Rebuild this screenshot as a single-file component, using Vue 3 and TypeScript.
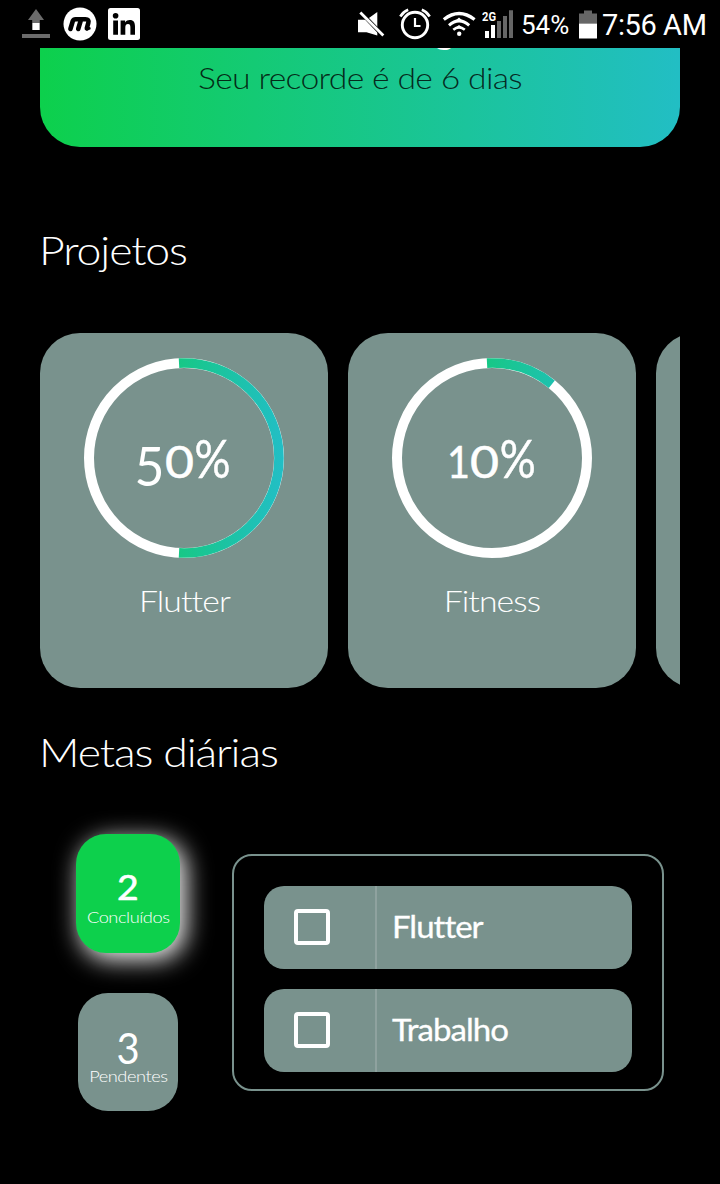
<script setup lang="ts">
interface Project {
  name: string
  progress: number
  digits: { char: string; x: number; y: number; width: number; tall?: boolean }[]
  percentX: number
  kind: string
}

interface Goal {
  name: string
  done: boolean
}

const projects: Project[] = [
  {
    name: 'Flutter',
    progress: 50,
    digits: [
      { char: '5', x: 50.5, y: 127.5, width: 30, tall: true },
      { char: '0', x: 81, y: 120, width: 29 },
    ],
    percentX: 110.5,
    kind: 'flutter',
  },
  {
    name: 'Fitness',
    progress: 10,
    digits: [
      { char: '1', x: 55, y: 120, width: 23 },
      { char: '0', x: 78, y: 120, width: 29 },
    ],
    percentX: 107.7,
    kind: 'fitness',
  },
]

const goals: Goal[] = [
  { name: 'Flutter', done: false },
  { name: 'Trabalho', done: false },
]

const RADIUS = 95

function arc(progress: number): string {
  const start = -Math.PI / 2 - 0.0526
  const end = -Math.PI / 2 + (progress / 100) * Math.PI * 2 + 0.0526
  const point = (a: number) => `${100 + RADIUS * Math.cos(a)} ${100 + RADIUS * Math.sin(a)}`
  const large = end - start > Math.PI ? 1 : 0
  return `M ${point(start)} A ${RADIUS} ${RADIUS} 0 ${large} 1 ${point(end)}`
}
</script>

<template>
  <div class="screen">
    <header class="status">
      <div class="left">
        <svg width="28" height="30" viewBox="22 9 28 30">
          <path d="M36 9 L44 20 H39.8 V30 H32.2 V20 H28 Z" fill="#6b6b6b" />
          <rect x="32.5" y="23" width="7" height="7" fill="#fff" />
          <rect x="22" y="34" width="28" height="4" fill="#6b6b6b" />
        </svg>
        <svg width="34" height="34" viewBox="0 0 34 34">
          <circle cx="17" cy="17" r="16.5" fill="#fff" />
          <g fill="none" stroke="#000" stroke-width="4.6" stroke-linecap="round" stroke-linejoin="round">
            <path d="M7.4 22 L9.8 14 Q10.6 12.2 12.5 12.2 H22.5 Q26.3 12.2 25.3 15.8 L23.8 21.4" />
            <path d="M15.2 22 L17.6 14" />
            <path d="M23.6 22 L26.2 21.4" stroke-width="3" />
          </g>
        </svg>
        <svg width="32" height="32" viewBox="0 0 32 32">
          <rect width="32" height="32" rx="2.5" fill="#fff" />
          <circle cx="7.6" cy="7.8" r="2.8" />
          <path d="M5.2 12.4 H10 V26.8 H5.2 Z M12.6 12.4 H17.1 V14.4 C18.3 12.7 19.8 12 21.7 12 C25.8 12 27 14.6 27 18.6 V26.8 H22.4 V19.7 C22.4 17.5 22.1 16 20 16 C17.9 16 17.3 17.6 17.3 19.7 V26.8 H12.6 Z" />
        </svg>
      </div>
      <div class="right">
        <svg width="27" height="26" viewBox="358 10.5 27 26">
          <path d="M358 19.3 H366.5 L377.3 11.5 V35 L366.5 31.7 H358 Z" fill="#fff" />
          <path d="M358.5 9.5 L382.5 34.5" stroke="#000" stroke-width="4" />
          <path d="M360.3 12 L383.3 35" stroke="#fff" stroke-width="2.8" />
        </svg>
        <svg class="alarm" width="32" height="32" viewBox="399 9 32 32">
          <g fill="none" stroke="#fff" stroke-width="2.9">
            <circle cx="415" cy="26" r="12.7" />
            <path d="M415 19 V27 H420.5" stroke-width="2.2" />
            <path d="M400.3 17.5 Q403.3 12.6 408.2 10.8 M421.8 10.8 Q426.7 12.6 429.7 17.5" stroke-width="2.6" />
          </g>
        </svg>
        <svg class="wifi" width="34" height="26" viewBox="442 10 34 26">
          <g fill="none" stroke="#fff">
            <path d="M443.8 18.5 Q459 6.5 474.6 18.5" stroke-width="3.2" />
            <path d="M449 24.3 Q459 15.5 469.2 24.3" stroke-width="3" />
            <path d="M453.3 28.7 Q459 24 464.8 28.7" stroke-width="2.6" />
          </g>
          <path d="M459 16.5 L464 21 H454 Z M455 27 L459 24 L463 27 Z" fill="#fff" />
          <circle cx="459.2" cy="32.7" r="2.2" fill="#fff" />
        </svg>
        <svg class="signal" width="32" height="31" viewBox="482 9 32 31">
          <text x="482" y="20.5" class="network" textLength="14" lengthAdjust="spacingAndGlyphs">2G</text>
          <path d="M485 31 H489 V38 H485 Z M491 25 H495 V38 H491 Z" fill="#fff" />
          <path d="M497 21 H501 V38 H497 Z M503 16 H507 V38 H503 Z M509 10.3 H513 V38 H509 Z" fill="#666" />
        </svg>
        <span class="battery-text">54%</span>
        <svg class="battery" width="18" height="29" viewBox="579 9.5 18 29">
          <path d="M579 13 H584 V10 H592 V13 H597 V23 H579 Z" fill="#666" />
          <rect x="579" y="23" width="18" height="15" fill="#fff" />
        </svg>
        <span class="clock">7:56 AM</span>
      </div>
    </header>

    <section class="hero">
      <span class="streak">g</span>
      <p class="record">Seu recorde é de 6 dias</p>
    </section>

    <h2 class="heading projects-title">Projetos</h2>

    <section class="projects">
      <article v-for="project in projects" :key="project.name" class="project">
        <svg class="ring" width="200" height="200" viewBox="0 0 200 200">
          <defs>
            <linearGradient :id="`ring-${project.kind}`" gradientUnits="userSpaceOnUse" x1="0" y1="0" x2="200" y2="0">
              <stop offset="0" stop-color="#0dd04c" />
              <stop offset="1" stop-color="#22bec6" />
            </linearGradient>
          </defs>
          <circle cx="100" cy="100" :r="RADIUS" fill="none" stroke="#fff" stroke-width="10" />
          <path :d="arc(project.progress)" fill="none" :stroke="`url(#ring-${project.kind})`" stroke-width="9.6" />
          <text class="value">
            <tspan
              v-for="digit in project.digits"
              :key="digit.char"
              :class="{ tall: digit.tall }"
              :x="digit.x"
              :y="digit.y"
              :textLength="digit.width"
              lengthAdjust="spacingAndGlyphs"
            >{{ digit.char }}</tspan><tspan
              class="sign"
              :x="project.percentX"
              y="120"
              textLength="36"
              lengthAdjust="spacingAndGlyphs"
            >%</tspan>
          </text>
        </svg>
        <span class="project-name">{{ project.name }}</span>
      </article>
      <article class="project" />
    </section>

    <h2 class="heading goals-title">Metas diárias</h2>

    <section class="goals">
      <div class="counters">
        <div class="counter active">
          <strong>2</strong>
          <span>Concluídos</span>
        </div>
        <div class="counter">
          <strong class="low">3</strong>
          <span>Pendentes</span>
        </div>
      </div>
      <div class="list">
        <div v-for="goal in goals" :key="goal.name" class="goal">
          <div class="check-cell"><span class="checkbox" :class="{ checked: goal.done }" /></div>
          <span class="goal-name">{{ goal.name }}</span>
        </div>
      </div>
    </section>
  </div>
</template>

<style>
html,
body {
  background: #000;
}
</style>

<style scoped>
.screen {
  width: 720px;
  height: 1184px;
  overflow: hidden;
  background: #000;
  color: #fff;
  font-family: Lato, "Open Sans", sans-serif;
  font-variant-ligatures: none;
}
.status {
  height: 48px;
  box-sizing: border-box;
  padding: 0 14px 0 22px;
  display: flex;
  justify-content: space-between;
  font-family: Roboto, sans-serif;
}
.left {
  display: flex;
  align-items: center;
  gap: 13px;
}
.left svg:nth-child(3) {
  margin-left: -2px;
}
.right {
  display: flex;
  align-items: center;
  white-space: nowrap;
}
.right svg {
  flex: none;
}
.alarm {
  margin-left: 14px;
}
.wifi {
  margin-left: 11px;
}
.signal {
  margin-left: 6px;
}
.network {
  font-size: 12px;
  font-weight: 700;
  fill: #fff;
}
.battery-text {
  width: 48px;
  margin-left: 7px;
  padding-top: 2px;
  font-size: 26px;
}
.battery {
  margin-left: 10px;
}
.clock {
  width: 104px;
  margin-left: 5px;
  padding-top: 2px;
  font-size: 29px;
  letter-spacing: -0.4px;
}
.hero {
  position: relative;
  height: 99px;
  margin: 0 40px;
  overflow: hidden;
  border-radius: 0 0 40px 40px;
  background: linear-gradient(90deg, #0dd04c, #22bec4);
}
.streak {
  position: absolute;
  left: 394px;
  top: -44px;
  font-size: 40px;
  line-height: 48px;
}
.record {
  margin: 0;
  padding-top: 11px;
  text-align: center;
  font-size: 29px;
  line-height: 38px;
  font-weight: 300;
  letter-spacing: -0.6px;
  color: rgba(0, 0, 0, 0.8);
  transform: scaleX(1.163);
}
.heading {
  margin: 0 0 0 39px;
  height: 48px;
  font-size: 40px;
  line-height: 48px;
  font-weight: 300;
  letter-spacing: -1px;
  transform: scaleX(1.115);
  transform-origin: left;
}
.projects-title {
  margin-top: 79px;
}
.projects {
  display: flex;
  gap: 20px;
  height: 355px;
  margin: 59px 40px 0;
  overflow: hidden;
}
.project {
  flex: none;
  width: 288px;
  box-sizing: border-box;
  padding-top: 25px;
  display: flex;
  flex-direction: column;
  align-items: center;
  border-radius: 40px;
  background: #79928d;
}
.ring {
  flex: none;
}
.value {
  font-size: 45px;
  fill: #fff;
  stroke: #fff;
  stroke-width: 0.5px;
}
.tall {
  font-size: 54px;
  stroke-width: 0;
}
.sign {
  font-size: 53px;
}
.project-name {
  margin-top: 23px;
  font-size: 30px;
  line-height: 38px;
  font-weight: 300;
  letter-spacing: -0.8px;
  transform: scaleX(1.125);
}
.goals-title {
  margin-top: 40px;
}
.goals {
  display: flex;
  align-items: flex-start;
  margin-top: 58px;
  padding-left: 76px;
}
.counters {
  width: 104px;
  display: flex;
  flex-direction: column;
  align-items: center;
  gap: 40px;
}
.counter {
  width: 100px;
  height: 118.5px;
  display: flex;
  flex-direction: column;
  align-items: center;
  border-radius: 30px;
  background: #79928d;
}
.active {
  width: 104px;
  background: #0dd04c;
  box-shadow: 5px 6px 24px 1px rgba(255, 255, 255, 0.95);
}
.counter strong {
  height: 32px;
  margin: 37px 0 4px;
  font-size: 34px;
  line-height: 32px;
  font-weight: 400;
  -webkit-text-stroke: 0.6px #fff;
  transform: scaleX(1.1);
}
.counter .low {
  height: 35px;
  margin: 38px 0 0;
  font-size: 42px;
  line-height: 35px;
  -webkit-text-stroke: 0;
  transform: scaleX(0.95);
}
.counter span {
  font-size: 16px;
  line-height: 20px;
  font-weight: 300;
  letter-spacing: -0.4px;
  transform: scaleX(1.14);
}
.list {
  width: 432px;
  height: 237px;
  box-sizing: border-box;
  margin: 20px 0 0 52px;
  padding: 30px;
  display: flex;
  flex-direction: column;
  gap: 20px;
  border: 2px solid #79928d;
  border-radius: 20px;
}
.goal {
  flex: none;
  height: 83px;
  display: flex;
  align-items: center;
  border-radius: 20px;
  background: #79928d;
}
.check-cell {
  width: 113px;
  height: 100%;
  box-sizing: border-box;
  padding: 23px 0 0 30px;
  border-right: 2px solid #8fa29f;
}
.checkbox {
  display: block;
  width: 36px;
  height: 36px;
  box-sizing: border-box;
  border: 4px solid #fff;
  border-radius: 4px;
}
.checkbox.checked {
  background: #fff;
}
.goal-name {
  margin: 0 0 3px 15px;
  font-size: 30px;
  line-height: 38px;
  letter-spacing: -0.9px;
  -webkit-text-stroke: 0.3px #fff;
  transform: scaleX(1.1);
  transform-origin: left;
}
</style>
